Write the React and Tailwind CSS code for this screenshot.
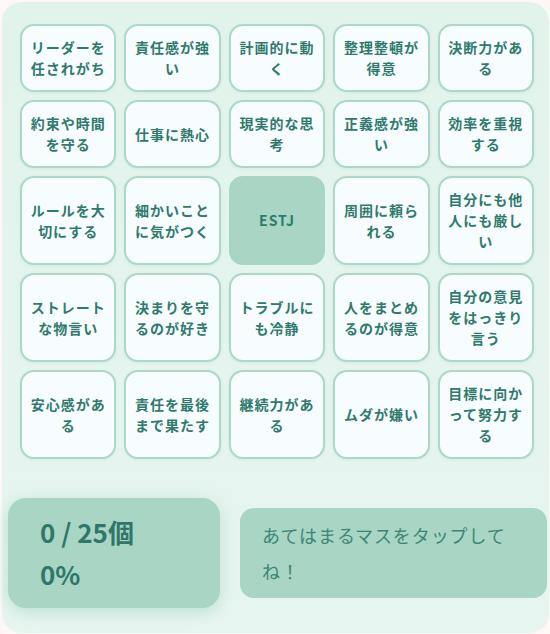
const CELLS = [
  "リーダーを任されがち",
  "責任感が強い",
  "計画的に動く",
  "整理整頓が得意",
  "決断力がある",
  "約束や時間を守る",
  "仕事に熱心",
  "現実的な思考",
  "正義感が強い",
  "効率を重視する",
  "ルールを大切にする",
  "細かいことに気がつく",
  "ESTJ",
  "周囲に頼られる",
  "自分にも他人にも厳しい",
  "ストレートな物言い",
  "決まりを守るのが好き",
  "トラブルにも冷静",
  "人をまとめるのが得意",
  "自分の意見をはっきり言う",
  "安心感がある",
  "責任を最後まで果たす",
  "継続力がある",
  "ムダが嫌い",
  "目標に向かって努力する",
];

function Cell({ label, center }) {
  if (center) {
    return (
      <div className="flex items-center justify-center rounded-[14px] border-2 border-[#a8d5c4] bg-[#a8d5c4] px-[8px] py-[11px] text-center text-[14px] font-bold leading-[21px] tracking-[1px] text-[#2f7a6c]">
        {label}
      </div>
    );
  }
  return (
    <button
      type="button"
      className="flex items-center justify-center rounded-[14px] border-2 border-[#acd8c7] bg-[#f7fcfe] px-[8px] py-[11px] text-center text-[14px] font-bold leading-[21px] tracking-[1px] text-[#2f7a6c] shadow-[0_1px_3px_rgba(120,190,165,0.15)]"
    >
      {label}
    </button>
  );
}

export default function App() {
  const checked = 0;

  return (
    <div className="min-h-[634px] bg-[#fdf8f6] pl-[2px] pt-[2px] font-['Noto_Sans_CJK_JP',sans-serif]">
      <div className="flex h-[631px] w-[547px] flex-col rounded-[20px] bg-gradient-to-b from-[#e2f3ec] to-[#e7f5f0] pt-[22px]">
        <div className="ml-[18px] grid w-[514px] grid-cols-5 gap-[8px]">
          {CELLS.map((label, i) => (
            <Cell key={i} label={label} center={i === 12} />
          ))}
        </div>

        <div className="mt-[39px] flex items-center gap-[20px] pl-[6px]">
          <div className="w-[212px] rounded-[18px] bg-[#a8d5c4] py-[13px] pl-[32px] text-[26px] font-bold leading-[42px] text-[#2f7768] shadow-[0_4px_16px_rgba(110,185,155,0.35)]">
            <p>{checked} / 25個</p>
            <p>0%</p>
          </div>
          <div className="w-[307px] rounded-[14px] bg-[#a8d5c4] px-[22px] py-[9px] text-[18px] leading-[36px] tracking-[0.9px] text-[#3d8574]">
            あてはまるマスをタップしてね！
          </div>
        </div>
      </div>
    </div>
  );
}
